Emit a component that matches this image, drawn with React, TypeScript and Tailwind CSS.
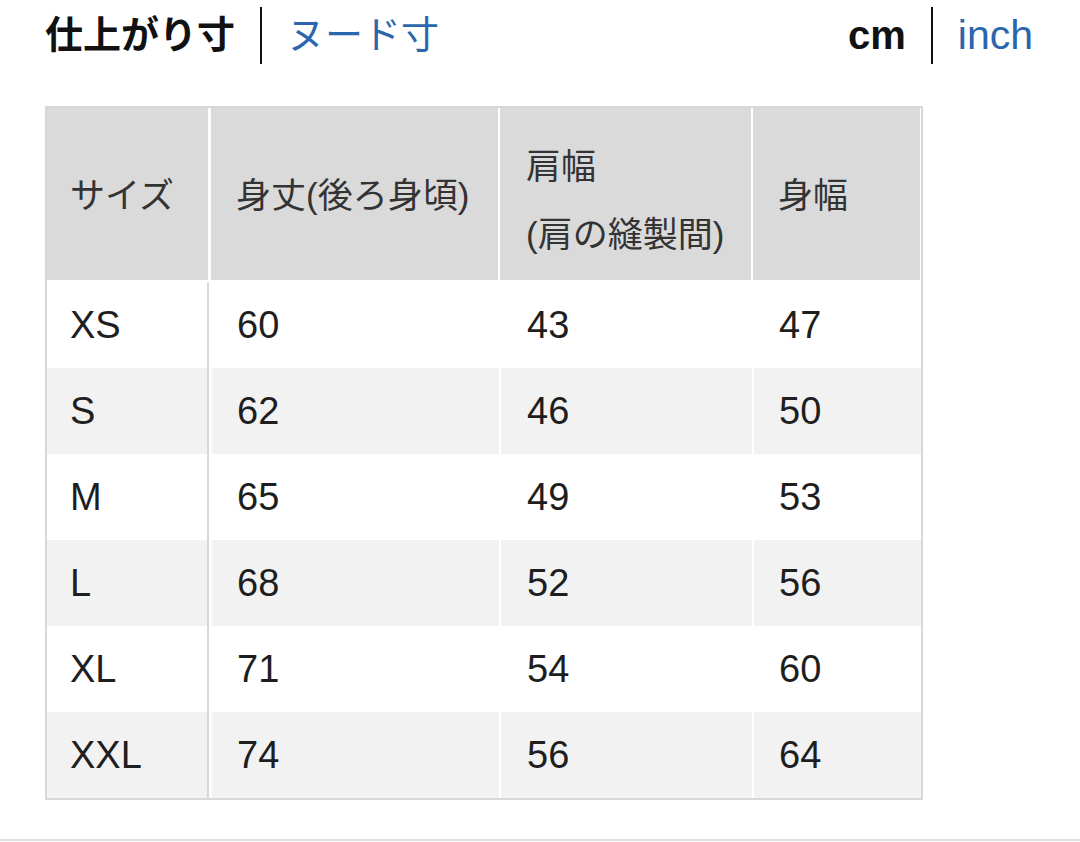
import React from "react";

const FONT = { fontFamily: '"Liberation Sans", "Noto Sans CJK JP", sans-serif' };

const rows = [
  ["XS", "60", "43", "47"],
  ["S", "62", "46", "50"],
  ["M", "65", "49", "53"],
  ["L", "68", "52", "56"],
  ["XL", "71", "54", "60"],
  ["XXL", "74", "56", "64"],
];

export default function App() {
  return (
    <div className="w-[1080px] h-[842px] bg-white relative overflow-hidden text-[#1a1a1a]" style={FONT}>
      <div className="flex items-center justify-between pl-[45px] pr-[47px] h-[70px]">
        <div className="flex items-center">
          <span className="text-[38px] font-bold text-[#111] leading-none">仕上がり寸</span>
          <span className="w-[2px] h-[57px] bg-[#111] mx-[25px]" />
          <span className="text-[38px] text-[#2a66ad] leading-none">ヌード寸</span>
        </div>
        <div className="flex items-center">
          <span className="text-[40px] font-bold text-[#111] leading-none">cm</span>
          <span className="w-[2px] h-[57px] bg-[#111] mx-[25px]" />
          <span className="text-[41px] text-[#2a66ad] leading-none">inch</span>
        </div>
      </div>

      <div className="ml-[45px] mt-[36px] w-[878px] border-2 border-[#d8d8d8] bg-white">
        <div className="grid grid-cols-[162px_287px_251px_167px] gap-x-[2px] h-[172px] text-[35px] text-[#333]">
          <div className="bg-[#dadada] flex items-center pl-[23px] pt-[5px] mr-[1px]">サイズ</div>
          <div className="bg-[#dadada] flex items-center pl-[25px] pt-[5px]">身丈(後ろ身頃)</div>
          <div className="bg-[#dadada] flex flex-col justify-center pl-[26px] pt-[14px] leading-[68px]">
            <span>肩幅</span>
            <span>(肩の縫製間)</span>
          </div>
          <div className="bg-[#dadada] flex items-center pl-[25px] pt-[5px]">身幅</div>
        </div>
        <div className="h-[2px]" />
        {rows.map((r, i) => (
          <div
            key={r[0]}
            className="grid grid-cols-[160px_2px_3px_287px_2px_251px_2px_167px] h-[86px] text-[38px] text-[#1e1e1e]"
          >
            <div className={`flex items-center pl-[23px] ${i % 2 === 1 ? "bg-[#f2f2f2]" : "bg-white"}`}>{r[0]}</div>
            <div className="bg-[#d8d8d8]" />
            <div className="bg-white" />
            <div className={`flex items-center pl-[25px] ${i % 2 === 1 ? "bg-[#f2f2f2]" : "bg-white"}`}>{r[1]}</div>
            <div className="bg-white" />
            <div className={`flex items-center pl-[26px] ${i % 2 === 1 ? "bg-[#f2f2f2]" : "bg-white"}`}>{r[2]}</div>
            <div className="bg-white" />
            <div className={`flex items-center pl-[25px] ${i % 2 === 1 ? "bg-[#f2f2f2]" : "bg-white"}`}>{r[3]}</div>
          </div>
        ))}
      </div>

      <div className="absolute left-0 right-0 top-[839px] h-[2px] bg-[#dedede]" />
    </div>
  );
}
